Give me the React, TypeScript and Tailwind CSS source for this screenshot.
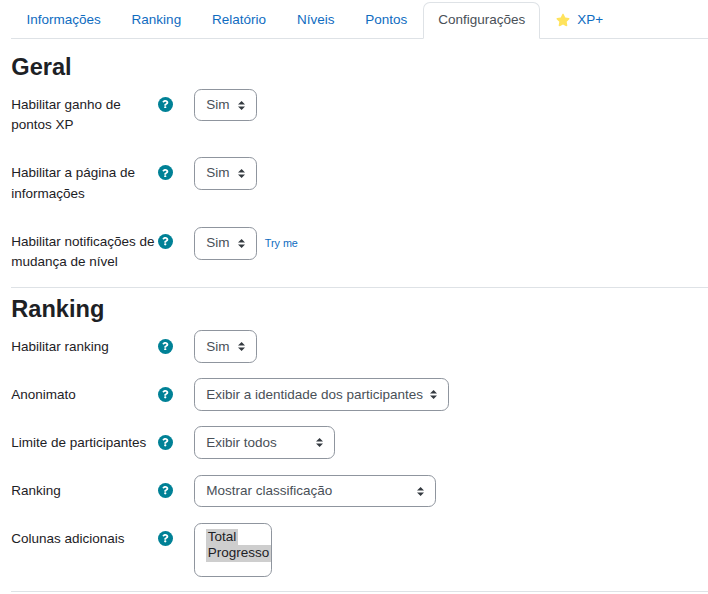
import type { ReactNode } from "react";
import { FaQuestion, FaStar } from "react-icons/fa";

const tabs = ["Informações", "Ranking", "Relatório", "Níveis", "Pontos", "Configurações"];

function Tab({ active, children }: { active?: boolean; children: ReactNode }) {
  return (
    <a
      className={
        "-mb-px flex h-[37px] items-start rounded-t-[7px] border pl-[14.45px] pt-[6.5px] whitespace-nowrap " +
        (active
          ? "border-[#dee2e6] border-b-white bg-white pr-[13.7px] text-[#495057]"
          : "border-transparent pr-[14.45px] text-[#0f6cbf]")
      }
    >
      {children}
    </a>
  );
}

function Select({ value, className }: { value: string; className: string }) {
  return (
    <div
      className={
        "flex h-[32.85px] items-center justify-between rounded-[7.2px] border border-[#8f959e] bg-white pr-[11px] pl-[11.2px] whitespace-nowrap text-[#495057] " +
        className
      }
    >
      <span>{value}</span>
      <svg className="h-[9px] w-[7.2px] shrink-0" viewBox="0 0 4 5">
        <path fill="#343a40" d="M2 0L0 2h4zm0 5L0 3h4z" />
      </svg>
    </div>
  );
}

function Row({ label, tall, children }: { label: string; tall?: boolean; children: ReactNode }) {
  return (
    <div className={"flex items-start " + (tall ? "h-[68.8px]" : "h-[48.07px]")}>
      <div className={"w-[147px] shrink-0 " + (tall ? "pt-[6px]" : "pt-[6.3px]")}>
        <span className="block w-[146px] pl-[0.3px] whitespace-normal">{label}</span>
      </div>
      <span
        className={
          "mr-[21px] flex size-[15px] shrink-0 items-center justify-center rounded-full bg-[#008196] " +
          (tall ? "mt-[8px]" : "mt-[8.4px]")
        }
      >
        <FaQuestion className="size-[8.5px] text-white" />
      </span>
      <div className="flex items-center">{children}</div>
    </div>
  );
}

export default function App() {
  return (
    <div className="h-[594px] w-[708px] overflow-hidden bg-white pt-[2px] pl-[11px] font-['Liberation_Sans',Arial,sans-serif] text-[13.5px] leading-[20.25px] text-[#1d2125]">
      <nav className="flex h-[37px] border-b border-[#dee2e6]">
        {tabs.map((t) => (
          <Tab key={t} active={t === "Configurações"}>
            {t}
          </Tab>
        ))}
        <Tab>
          <FaStar className="mt-[3.8px] mr-[7.6px] ml-[0.3px] size-[14px] text-[#ffe35c]" />
          XP+
        </Tab>
      </nav>

      <section className="h-[249px] border-b border-[#dee2e6] pt-[14px]">
        <h3 className="h-[35.6px] pl-[0.3px] text-[23.6px] leading-[28.3px] font-bold">Geral</h3>
        <Row label="Habilitar ganho de pontos XP" tall>
          <Select value="Sim" className="w-[63px]" />
        </Row>
        <Row label="Habilitar a página de informações" tall>
          <Select value="Sim" className="-mt-[0.35px] w-[63px]" />
        </Row>
        <Row label="Habilitar notificações de mudança de nível" tall>
          <Select value="Sim" className="mt-[0.6px] w-[63px]" />
          <a className="ml-[7.7px] text-[10.8px] text-[#0f6cbf]">Try me</a>
        </Row>
      </section>

      <section className="h-[304px] border-b border-[#dee2e6] pt-[7px]">
        <h3 className="h-[35.3px] pl-[0.3px] text-[23.6px] leading-[28.3px] font-bold">Ranking</h3>
        <Row label="Habilitar ranking">
          <Select value="Sim" className="w-[63px]" />
        </Row>
        <Row label="Anonimato">
          <Select value="Exibir a identidade dos participantes" className="w-[255px]" />
        </Row>
        <Row label="Limite de participantes">
          <Select value="Exibir todos" className="w-[141px]" />
        </Row>
        <Row label="Ranking">
          <Select value="Mostrar classificação" className="mt-[0.15px] w-[242px]" />
        </Row>
        <Row label="Colunas adicionais">
          <div className="flex h-[54px] w-[78px] flex-col items-start overflow-hidden rounded-[7.2px] border border-[#8f959e] pt-[5px] pl-[11px] leading-4">
            <span className="h-4 bg-[#cecece] px-[1.8px]">Total</span>
            <span className="h-[17px] bg-[#cecece] px-[1.8px]">Progresso</span>
          </div>
        </Row>
      </section>
    </div>
  );
}
